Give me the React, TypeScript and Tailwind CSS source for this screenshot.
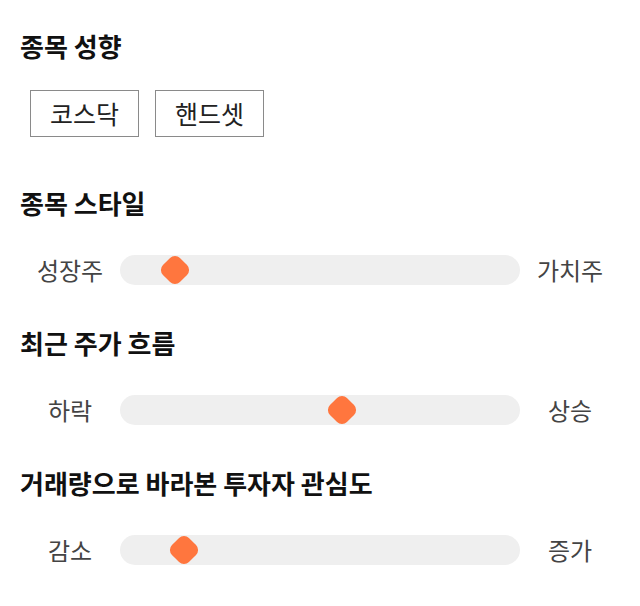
const font = { fontFamily: '"Noto Sans CJK KR", "Noto Sans", sans-serif' };

type SliderRow = {
  title: string;
  left: string;
  right: string;
  thumb: number; // px from track's left edge to thumb center
};

const sliders: SliderRow[] = [
  { title: '종목 스타일', left: '성장주', right: '가치주', thumb: 55 },
  { title: '최근 주가 흐름', left: '하락', right: '상승', thumb: 222 },
  { title: '거래량으로 바라본 투자자 관심도', left: '감소', right: '증가', thumb: 64 },
];

function Heading({ children }: { children: string }) {
  return (
    <h2 className="h-8 text-[26px] font-bold leading-8 text-[#111]">{children}</h2>
  );
}

function Slider({ row }: { row: SliderRow }) {
  return (
    <div className="mt-[36px] flex h-[30px] items-center">
      <span className="w-[100px] text-center text-[24px] text-[#444]">{row.left}</span>
      <div className="relative h-[30px] flex-1 rounded-full bg-[#efefef]">
        <div
          className="absolute top-1/2 size-6 -translate-x-1/2 -translate-y-1/2 rotate-45 rounded-[7px] bg-[#ff763e]"
          style={{ left: `${row.thumb}px` }}
        />
      </div>
      <span className="w-[100px] text-center text-[24px] text-[#444]">{row.right}</span>
    </div>
  );
}

export default function App() {
  return (
    <div className="min-h-[606px] w-[640px] bg-white px-5 pt-[30px]" style={font}>
      <section>
        <Heading>종목 성향</Heading>
        <div className="mt-[28px] flex gap-4 pl-[10px]">
          {['코스닥', '핸드셋'].map((label) => (
            <button
              key={label}
              className="flex h-[47px] w-[109px] items-center justify-center border border-[#8a8a8a] text-[25px] text-[#222]"
            >
              {label}
            </button>
          ))}
        </div>
      </section>
      {sliders.map((row, i) => (
        <section key={row.title} className={i === 0 ? 'mt-[50px]' : 'mt-[42px]'}>
          <Heading>{row.title}</Heading>
          <Slider row={row} />
        </section>
      ))}
    </div>
  );
}
